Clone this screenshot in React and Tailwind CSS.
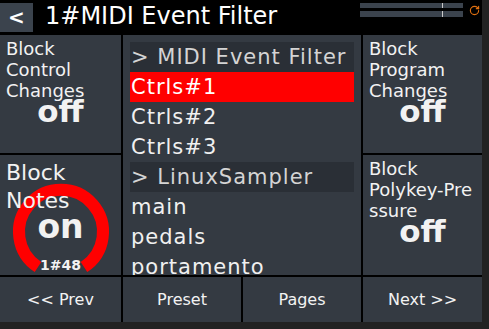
import { RotateCw } from "lucide-react";

const font = { fontFamily: '"DejaVu Sans", "Liberation Sans", sans-serif' };

function TogglePanel({ lines, value }) {
  return (
    <div className="bg-[#343a42] h-full pl-[6px] pt-[3px] text-[#f2f2f2] overflow-hidden">
      <div className="text-[18px] leading-[21px] whitespace-nowrap">
        {lines.map((l) => (
          <div key={l}>{l}</div>
        ))}
      </div>
      <div className="text-center text-[31px] font-bold leading-[20px] tracking-[0px] pr-[6px]">
        {value}
      </div>
    </div>
  );
}

function NotesPanel() {
  return (
    <div className="relative bg-[#343a42] h-full text-[#f2f2f2]">
      <svg className="absolute left-0 top-0" width="121" height="120" viewBox="0 0 121 120">
        <path
          d="M 38 112 A 42 42 0 1 1 84 112"
          fill="none"
          stroke="#ff0000"
          strokeWidth="12"
        />
      </svg>
      <div className="relative pl-[6px] pt-[4px] text-[22px] leading-[28px]">
        <div>Block</div>
        <div>Notes</div>
      </div>
      <div className="absolute left-0 right-0 top-[56px] text-center text-[33px] font-bold leading-[32px]">
        on
      </div>
      <div className="absolute left-0 right-0 top-[102px] text-center text-[14px] leading-[16px] font-bold">
        1#48
      </div>
    </div>
  );
}

const items = [
  { t: "> MIDI Event Filter", head: true },
  { t: "Ctrls#1", sel: true },
  { t: "Ctrls#2" },
  { t: "Ctrls#3" },
  { t: "> LinuxSampler", head: true },
  { t: "main" },
  { t: "pedals" },
  { t: "portamento" },
];

function PresetList() {
  return (
    <div className="bg-[#343a42] h-full px-[7px] pt-[7px] overflow-hidden">
      {items.map((it, i) => (
        <div
          key={i}
          className={`h-[30px] leading-[30px] text-[21px] tracking-[1px] pl-[1px] whitespace-nowrap ${
            it.head
              ? "bg-[#2a2f36] text-[#d4d4d4]"
              : it.sel
              ? "bg-[#ff0000] text-white"
              : "text-[#f0f0f0]"
          }`}
        >
          {it.t}
        </div>
      ))}
    </div>
  );
}

export default function App() {
  return (
    <div className="w-[489px] h-[329px] bg-[#222222]" style={font}>
      <div className="w-[482px] h-[322px] bg-black flex flex-col gap-[2px]">
        <div className="h-[33px] flex items-center relative">
          <div className="w-[33px] h-[29px] mt-[1px] bg-[#3b434d] flex items-center justify-center text-white text-[20px] font-bold">
            &lt;
          </div>
          <div className="ml-[12px] text-white text-[24px] leading-[33px]">
            1#MIDI Event Filter
          </div>
          <div className="absolute left-[360px] top-[3px] flex flex-col gap-[3px]">
            <div className="relative w-[103px] h-[5px] bg-[#3b434d]">
              <div className="absolute left-[82px] top-0 w-[1px] h-[5px] bg-[#c8c8c8]" />
            </div>
            <div className="relative w-[103px] h-[6px] bg-[#3b434d]">
              <div className="absolute left-[82px] top-0 w-[1px] h-[6px] bg-[#c8c8c8]" />
            </div>
          </div>
          <RotateCw
            className="absolute left-[469px] top-[5px] text-[#e07010]"
            size={11}
            strokeWidth={2.5}
          />
        </div>

        <div className="h-[240px] grid grid-cols-[121px_238px_119px] gap-[2px]">
          <div className="flex flex-col gap-[2px]">
            <div className="h-[118px]">
              <TogglePanel lines={["Block", "Control", "Changes"]} value="off" />
            </div>
            <div className="h-[120px]">
              <NotesPanel />
            </div>
          </div>
          <PresetList />
          <div className="flex flex-col gap-[2px]">
            <div className="h-[118px]">
              <TogglePanel lines={["Block", "Program", "Changes"]} value="off" />
            </div>
            <div className="h-[120px]">
              <TogglePanel lines={["Block", "Polykey-Pre", "ssure"]} value="off" />
            </div>
          </div>
        </div>

        <div className="h-[45px] grid grid-cols-[121px_118px_118px_119px] gap-[2px]">
          {["<< Prev", "Preset", "Pages", "Next >>"].map((b) => (
            <div
              key={b}
              className="bg-[#343a42] flex items-center justify-center text-[#f2f2f2] text-[16px]"
            >
              {b}
            </div>
          ))}
        </div>
      </div>
    </div>
  );
}
